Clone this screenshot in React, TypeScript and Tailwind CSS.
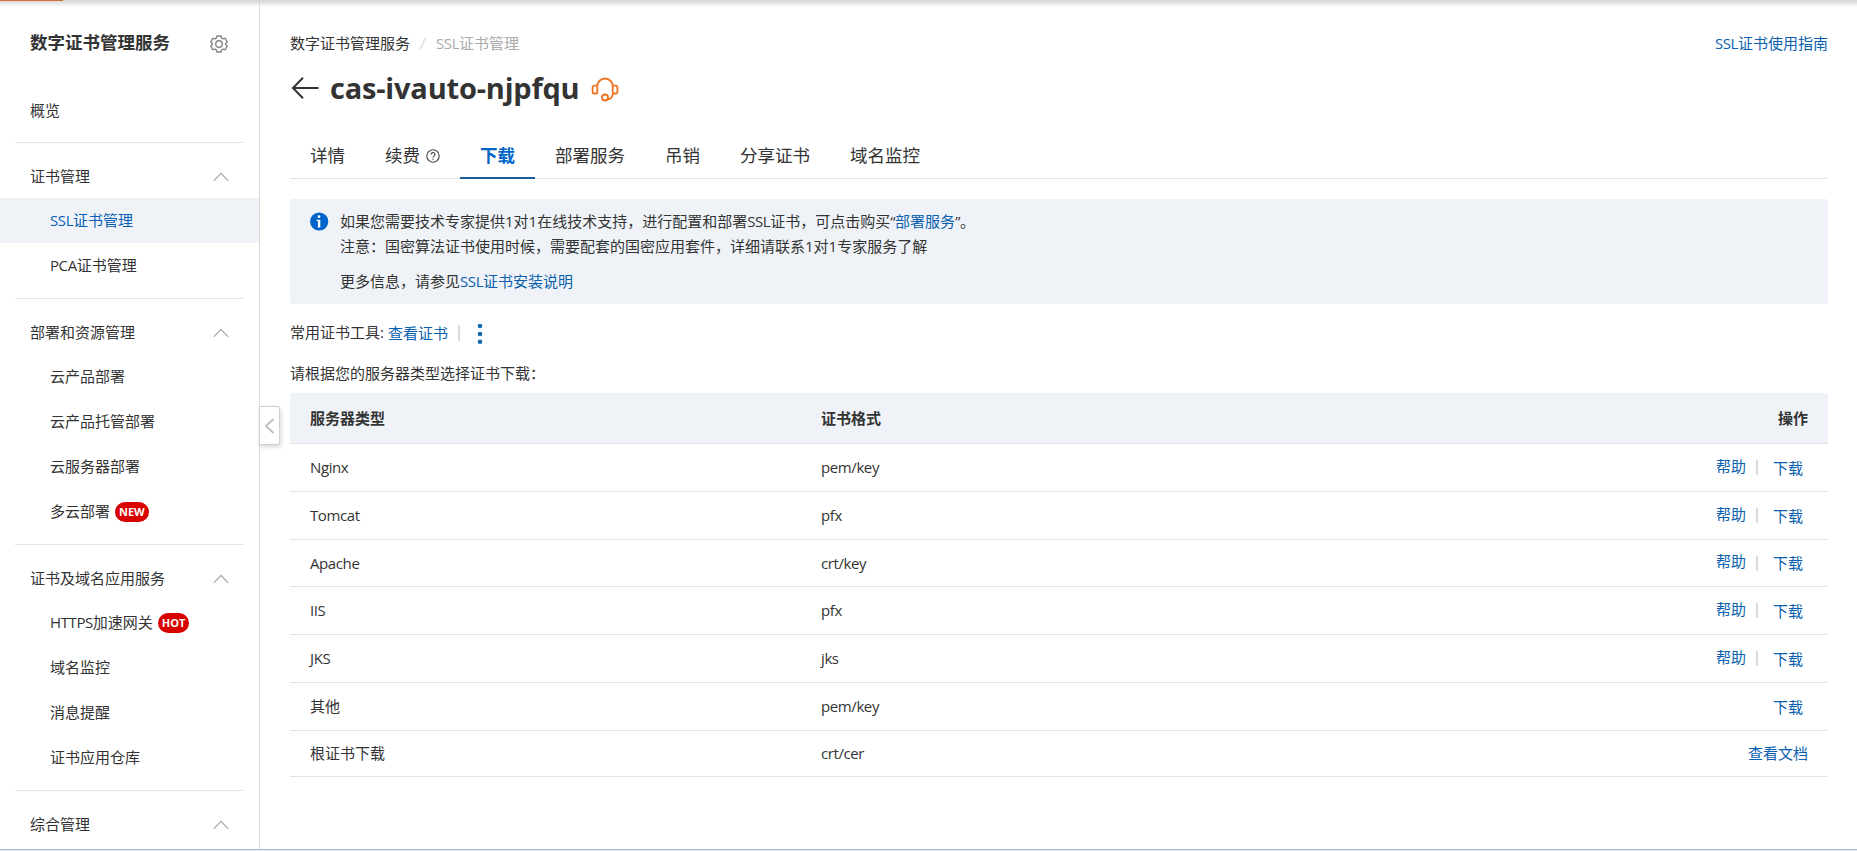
import type { ReactNode } from 'react';

type Item = { label: string; badge?: string; active?: boolean };
type Group = { title: string; items: Item[] };

const groups: Group[] = [
  { title: '证书管理', items: [{ label: 'SSL证书管理', active: true }, { label: 'PCA证书管理' }] },
  {
    title: '部署和资源管理',
    items: [{ label: '云产品部署' }, { label: '云产品托管部署' }, { label: '云服务器部署' }, { label: '多云部署', badge: 'NEW' }],
  },
  {
    title: '证书及域名应用服务',
    items: [{ label: 'HTTPS加速网关', badge: 'HOT' }, { label: '域名监控' }, { label: '消息提醒' }, { label: '证书应用仓库' }],
  },
  { title: '综合管理', items: [] },
];

const rows = [
  { name: 'Nginx', format: 'pem/key', kind: 'both', height: 'h-[48px]' },
  { name: 'Tomcat', format: 'pfx', kind: 'both', height: 'h-[48px]' },
  { name: 'Apache', format: 'crt/key', kind: 'both', height: 'h-[47px]' },
  { name: 'IIS', format: 'pfx', kind: 'both', height: 'h-[48px]' },
  { name: 'JKS', format: 'jks', kind: 'both', height: 'h-[48px]' },
  { name: '其他', format: 'pem/key', kind: 'download', height: 'h-[48px]' },
  { name: '根证书下载', format: 'crt/cer', kind: 'doc', height: 'h-[46px]' },
];

// Tightens runs of Latin letters inside Chinese text.
function Mixed({ text }: { text: string }) {
  return (
    <>
      {text.split(/([A-Za-z/“”:]+)/).map((part, i) =>
        i % 2 ? <span key={i} className="tracking-[-0.4px]">{part}</span> : part
      )}
    </>
  );
}

function Gear() {
  return (
    <svg width="18" height="18" viewBox="0 0 18 18" fill="none" stroke="#888" strokeWidth="1.4" strokeLinejoin="round">
      <path d="M6.9 1h4.2l.6 2.2 1.2.7 2.2-.6 2.1 3.6-1.6 1.6v1l1.6 1.6-2.1 3.6-2.2-.6-1.2.7-.6 2.2H6.9l-.6-2.2-1.2-.7-2.2.6L.8 11.1l1.6-1.6v-1L.8 6.9l2.1-3.6 2.2.6 1.2-.7z" />
      <circle cx="9" cy="9" r="3.3" />
    </svg>
  );
}

function ChevronUp() {
  return (
    <svg width="16" height="10" viewBox="0 0 16 10" fill="none" stroke="#a6a6a6" strokeWidth="1.2">
      <path d="M0.8 8.8L8 1.4L15.2 8.8" />
    </svg>
  );
}

function Sidebar() {
  return (
    <aside className="w-[260px] shrink-0 border-r border-[#dcdcdc] flex flex-col">
      <div className="h-[85px] shrink-0 pl-[30px] pr-[31px] flex items-center justify-between">
        <span className="text-[17.5px] font-bold">数字证书管理服务</span>
        <span className="pt-[3px]"><Gear /></span>
      </div>
      <div className="h-[57px] shrink-0 pl-[30px] pb-[7px] flex items-center">概览</div>
      {groups.map((g) => (
        <section key={g.title} className="shrink-0 pb-[10px]">
          <div className="h-px ml-[15px] mr-[15px] bg-[#e3e3e3]" />
          <div className="mt-[10px] h-[45px] pl-[30px] pr-[30px] pt-[2px] flex items-center justify-between">
            <span>{g.title}</span>
            <ChevronUp />
          </div>
          {g.items.map((it) => (
            <div
              key={it.label}
              className={it.active ? 'h-[45px] pl-[50px] flex items-center bg-[#eff3f8] text-[#0a5fb4]' : 'h-[45px] pl-[50px] flex items-center'}
            >
              <span><Mixed text={it.label} /></span>
              {it.badge && (
                <span className="ml-[5px] h-[20px] px-[4px] rounded-full bg-[#d90000] text-white text-[11px] font-bold flex items-center">{it.badge}</span>
              )}
            </div>
          ))}
        </section>
      ))}
    </aside>
  );
}

function Tab({ children, active }: { children: ReactNode; active?: boolean }) {
  return (
    <div
      className={
        active
          ? 'px-[20px] pb-px h-[44px] flex items-center border-b-2 border-[#1a5a9e] text-[#0064c8] font-bold'
          : 'px-[20px] pb-[2px] h-[43px] flex items-center'
      }
    >
      {children}
    </div>
  );
}

function Actions({ kind }: { kind: string }) {
  if (kind === 'doc') return <span className="pr-[20px]">查看文档</span>;
  return (
    <span className="flex items-center pr-[25px]">
      {kind === 'both' && (
        <>
          <span className="pb-[3px]">帮助</span>
          <span className="ml-[10px] mr-[15px] w-[2px] h-[15px] bg-[#dadada]" />
        </>
      )}
      <span className="pt-px">下载</span>
    </span>
  );
}

export default function App() {
  return (
    <div
      className="relative w-[1857px] h-[851px] overflow-hidden bg-white text-[#333] text-[15px] leading-[25px] flex flex-col whitespace-nowrap"
      style={{ fontFamily: '"Open Sans", "Noto Sans CJK SC", sans-serif' }}
    >
      <div className="absolute left-0 top-0 w-full h-[7px] bg-gradient-to-b from-[#d2d5d5] to-transparent" />
      <div className="absolute left-0 top-0 w-[63px] h-px bg-[#d2713c]" />

      <div className="flex h-[849px] shrink-0 overflow-hidden">
        <Sidebar />
        <main className="w-[1597px] pl-[30px] pr-[29px] flex flex-col">
          <div className="mt-[31px] h-[25px] flex items-center">
            <span>数字证书管理服务</span>
            <svg className="ml-[9px]" width="8" height="14" viewBox="0 0 8 14"><path d="M1 13L6.5 0.5" stroke="#dcdcdc" strokeWidth="1.2" /></svg>
            <span className="ml-[9px] text-[#aaa]"><Mixed text="SSL证书管理" /></span>
            <span className="ml-auto text-[#0a5fae]"><Mixed text="SSL证书使用指南" /></span>
          </div>

          <div className="mt-[11px] h-[42px] flex items-center">
            <svg className="ml-px" width="29" height="24" viewBox="0 0 29 24" fill="none" stroke="#333" strokeWidth="2">
              <path d="M12 1.8L2 12L12 22.2M2 12H27.5" />
            </svg>
            <h1 className="ml-[10px] w-[249px] text-[29px] tracking-[-0.2px] font-bold leading-[42px]">cas-ivauto-njpfqu</h1>
            <svg className="ml-[12px] mt-[2px]" width="28" height="25" viewBox="0 0 28 25" fill="none" stroke="#ee7420" strokeWidth="1.8">
              <path d="M6.3 16.5V9.2a7.7 7.7 0 0 1 15.400 0V16.5" />
              <path d="M6.3 8.600H3.200a1.600 1.600 0 0 0-1.600 1.600v4.700a1.600 1.600 0 0 0 1.600 1.600H6.300" />
              <path d="M21.700 8.600H24.800a1.600 1.600 0 0 1 1.600 1.600v4.700a1.600 1.600 0 0 1-1.600 1.600H21.700" />
              <path d="M21.700 16.500c0 3.300-2 5.700-5.200 5.900" />
              <circle cx="14" cy="20.500" r="3" />
            </svg>
          </div>

          <div className="mt-[26px] h-[44px] flex items-start text-[17.5px] border-b border-[#e3e3e3]">
            <Tab>详情</Tab>
            <Tab>
              续费
              <svg className="ml-[6px]" width="14" height="14" viewBox="0 0 14 14" fill="none" stroke="#444" strokeWidth="1.1">
                <circle cx="7" cy="7" r="6.200" />
                <path d="M5 5.600a2 2 0 1 1 2.800 1.800C7.200 7.700 7 8 7 8.600M7 9.600V10.800" />
              </svg>
            </Tab>
            <Tab active>下载</Tab>
            <Tab>部署服务</Tab>
            <Tab>吊销</Tab>
            <Tab>分享证书</Tab>
            <Tab>域名监控</Tab>
          </div>

          <div className="mt-[20px] h-[105px] shrink-0 rounded-[3px] bg-[#eff3f8] pl-[20px] pt-[10px] flex items-start">
            <svg className="mt-[3px] shrink-0" width="19" height="19" viewBox="0 0 19 19">
              <circle cx="9.200" cy="9.500" r="9.100" fill="#0064c8" />
              <circle cx="9" cy="4.700" r="1.400" fill="#fff" />
              <path d="M6.600 7.700H10.300V15.500H7.900V9H6.600z" fill="#fff" />
            </svg>
            <div className="ml-[11px]">
              <div>
                <Mixed text="如果您需要技术专家提供1对1在线技术支持，进行配置和部署SSL证书，可点击购买“" />
                <span className="text-[#0a5fae]">部署服务</span>
                <Mixed text="”。" />
              </div>
              <div>注意：国密算法证书使用时候，需要配套的国密应用套件，详细请联系1对1专家服务了解</div>
              <div className="mt-[10px]">更多信息，请参见<span className="text-[#0a5fae]"><Mixed text="SSL证书安装说明" /></span></div>
            </div>
          </div>

          <div className="mt-[15px] h-[27px] flex items-center">
            <span><Mixed text="常用证书工具:" /></span>
            <span className="ml-[4.5px] pt-px text-[#0a5fae]">查看证书</span>
            <span className="ml-[10px] w-[2px] h-[16px] bg-[#dadada]" />
            <svg className="ml-[16px] mt-[2px]" width="8" height="22" viewBox="0 0 8 22" fill="#0f6ab4">
              <circle cx="4" cy="3" r="2.300" /><circle cx="4" cy="11" r="2.300" /><circle cx="4" cy="18.700" r="2.300" />
            </svg>
          </div>

          <div className="mt-[15px] h-[25px]">请根据您的服务器类型选择证书下载：</div>

          <div className="mt-[7px]">
            <div className="h-[51px] rounded-t-[3px] border-b border-[#e0e3e6] bg-[#eff3f8] pl-[20px] grid grid-cols-[511px_1fr_auto] items-center font-bold">
              <span>服务器类型</span>
              <span>证书格式</span>
              <span className="pr-[20px]">操作</span>
            </div>
            {rows.map((r) => (
              <div key={r.name} className={`${r.height} border-b border-[#e3e3e3] pl-[20px] grid grid-cols-[511px_1fr_auto] items-center`}>
                <span><Mixed text={r.name} /></span>
                <span><Mixed text={r.format} /></span>
                <span className="text-[#0a5fae]"><Actions kind={r.kind} /></span>
              </div>
            ))}
          </div>
        </main>
      </div>

      <div className="h-px bg-[#a9b8cc]" />
      <div className="h-px bg-[#dfe6f2]" />

      <div className="absolute left-[259px] top-[406px] w-[21px] h-[39px] bg-white border border-[#d0d0d0] rounded-r-[2px] shadow-[1px_2px_4px_rgba(0,0,0,0.16)] flex items-center justify-center">
        <svg width="11" height="16" viewBox="0 0 11 16" fill="none" stroke="#bdbdbd" strokeWidth="1.900"><path d="M9.500 1L2 8L9.500 15" /></svg>
      </div>
    </div>
  );
}
